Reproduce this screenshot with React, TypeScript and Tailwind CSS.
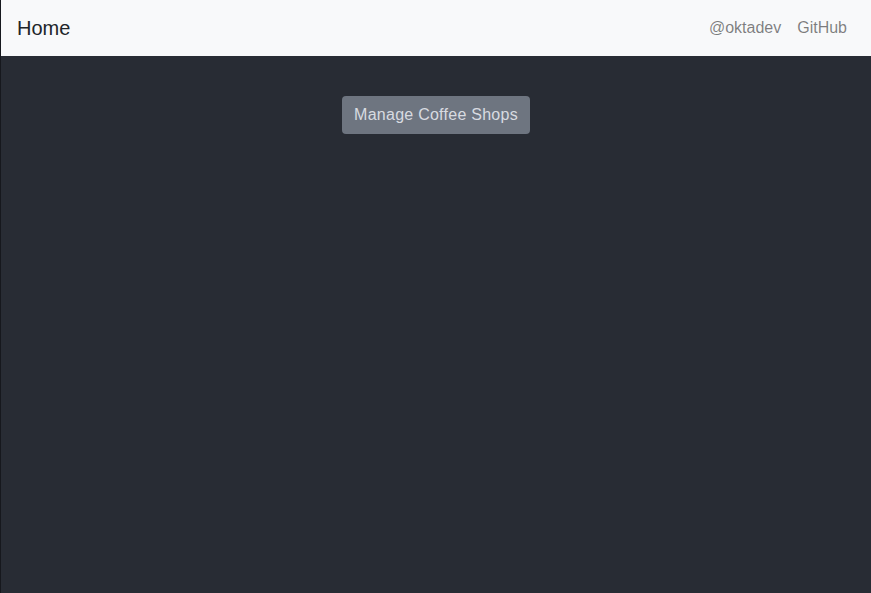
export default function App() {
  return (
    <div
      className="min-h-[593px] bg-[#282c34] border-l border-[#16181d] flex flex-col"
      style={{ fontFamily: '"Liberation Sans", Arial, sans-serif' }}
    >
      <nav className="h-14 bg-[#f8f9fa] flex items-center justify-between px-4">
        <a className="text-[20px] leading-[30px] text-[#212529]">Home</a>
        <div className="flex items-center">
          <a className="px-2 text-base text-[rgba(0,0,0,0.5)]">@oktadev</a>
          <a className="px-2 text-base text-[rgba(0,0,0,0.5)]">GitHub</a>
        </div>
      </nav>
      <div className="flex justify-center pt-10">
        <button className="h-[38px] px-3 rounded bg-[#6e7580] text-base text-[#d8dbe0] leading-6 tracking-[0.26px]">
          Manage Coffee Shops
        </button>
      </div>
    </div>
  )
}
